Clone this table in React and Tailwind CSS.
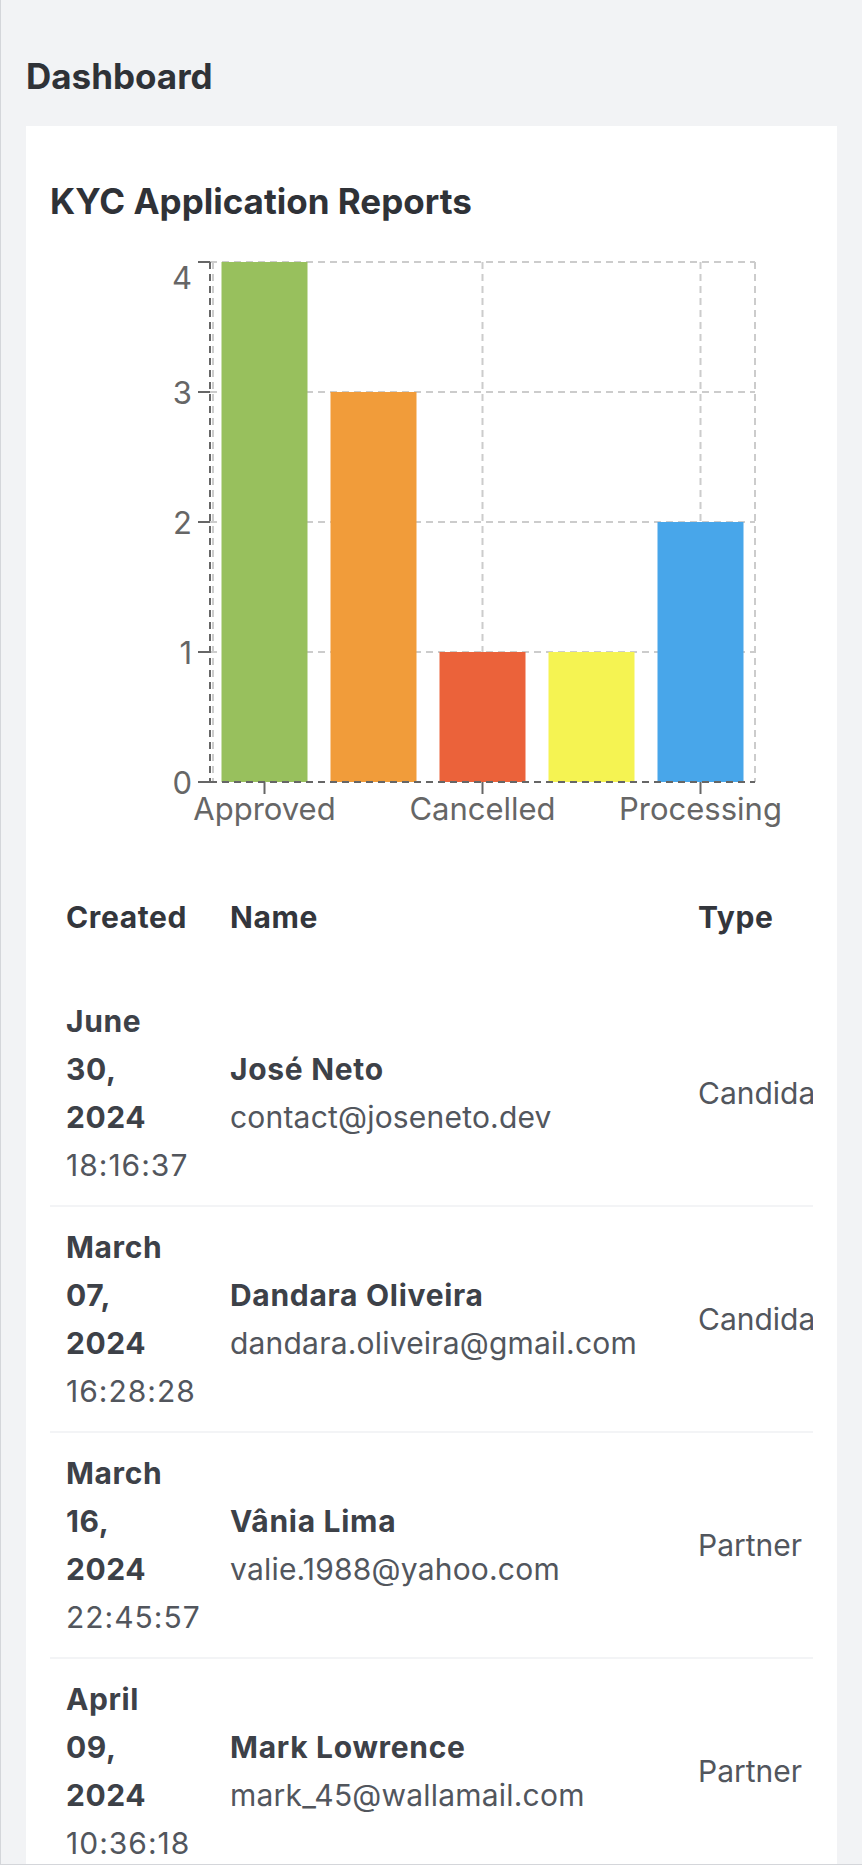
const bars = [
  { label: 'Approved', value: 4, color: '#98c05d' },
  { label: 'Pending', value: 3, color: '#f19c3a' },
  { label: 'Cancelled', value: 1, color: '#eb623a' },
  { label: 'Review', value: 1, color: '#f5f352' },
  { label: 'Processing', value: 2, color: '#48a6ea' },
];

const rows = [
  { date: ['June', '30,', '2024'], time: '18:16:37', name: 'José Neto', email: 'contact@joseneto.dev', type: 'Candidate' },
  { date: ['March', '07,', '2024'], time: '16:28:28', name: 'Dandara Oliveira', email: 'dandara.oliveira@gmail.com', type: 'Candidate' },
  { date: ['March', '16,', '2024'], time: '22:45:57', name: 'Vânia Lima', email: 'valie.1988@yahoo.com', type: 'Partner' },
  { date: ['April', '09,', '2024'], time: '10:36:18', name: 'Mark Lowrence', email: 'mark_45@wallamail.com', type: 'Partner' },
];

// chart geometry (svg units = page px)
const X0 = 160;
const X1 = 705;
const Y0 = 561;
const UNIT = 130;
const BAND = (X1 - X0) / 5;

function Chart() {
  const center = (i) => X0 + BAND * i + BAND / 2;
  return (
    <svg width="763" height="620" className="block">
      {/* grid */}
      {[1, 2, 3, 4].map((k) => (
        <line key={k} x1={X0} x2={X1} y1={Y0 - k * UNIT} y2={Y0 - k * UNIT} stroke="#ccc" strokeWidth="2" strokeDasharray="7 5" />
      ))}
      {[X0 + 3, center(0), center(2), center(4), X1].map((x, i) => (
        <line key={i} x1={x} x2={x} y1={Y0 - 4 * UNIT} y2={Y0} stroke="#ccc" strokeWidth="2" strokeDasharray="7 5" />
      ))}

      {/* bars */}
      {bars.map((b, i) => (
        <rect key={b.label} x={X0 + BAND * i + 11.5} y={Y0 - b.value * UNIT} width="86" height={b.value * UNIT} fill={b.color} />
      ))}

      {/* axes */}
      <line x1={X0} x2={X0} y1={Y0 - 4 * UNIT} y2={Y0} stroke="#666" strokeWidth="2" strokeDasharray="7 5" />
      <line x1={X0} x2={X1} y1={Y0} y2={Y0} stroke="#666" strokeWidth="2" strokeDasharray="7 5" />
      {[0, 1, 2, 3, 4].map((k) => (
        <line key={k} x1={X0 - 12} x2={X0} y1={Y0 - k * UNIT} y2={Y0 - k * UNIT} stroke="#666" strokeWidth="2" />
      ))}
      {[0, 2, 4].map((i) => (
        <line key={i} x1={center(i)} x2={center(i)} y1={Y0} y2={Y0 + 12} stroke="#666" strokeWidth="2" />
      ))}

      {/* labels */}
      {[0, 1, 2, 3, 4].map((k) => (
        <text
          key={k}
          x="142"
          y={k === 4 ? 56 : Y0 - k * UNIT}
          textAnchor="end"
          dominantBaseline="central"
          fontSize="31"
          fill="#666"
          fontFamily="Inter, sans-serif"
        >
          {k}
        </text>
      ))}
      {[0, 2, 4].map((i) => (
        <text key={i} x={center(i)} y="599" textAnchor="middle" fontSize="31" fill="#666" fontFamily="Inter, sans-serif">
          {bars[i].label}
        </text>
      ))}
    </svg>
  );
}

export default function App() {
  return (
    <div className="h-[1865px] overflow-hidden border-l border-b border-[#d4d6da] bg-[#f2f3f5] px-[25px] font-['Inter',sans-serif]">
      <h1 className="pt-[56px] text-[35px] leading-[40px] font-bold text-[#2f3237]">Dashboard</h1>

      <div className="mt-[30px] bg-white px-[24px] pt-[55px]">
        <h2 className="text-[35px] leading-[40px] font-bold text-[#2f3237]">KYC Application Reports</h2>

        <Chart />

        <div className="mt-[36px] overflow-hidden">
          <table className="w-[1000px] table-fixed border-collapse text-left text-[30px] leading-[48px]">
            <colgroup>
              <col className="w-[164px]" />
              <col className="w-[468px]" />
              <col className="w-[368px]" />
            </colgroup>
            <thead>
              <tr className="text-[#33363c] tracking-[0.6px]">
                <th className="px-[16px] pt-[16px] pb-[40px] font-bold">Created</th>
                <th className="px-[16px] pt-[16px] pb-[40px] font-bold">Name</th>
                <th className="px-[16px] pt-[16px] pb-[40px] font-bold">Type</th>
              </tr>
            </thead>
            <tbody>
              {rows.map((r) => (
                <tr key={r.email} className="border-b-2 border-[#f3f4f6]">
                  <td className="px-[16px] py-[16px] align-middle">
                    {r.date.map((w) => (
                      <div key={w} className="font-bold tracking-[0.6px] text-[#3d4148]">{w}</div>
                    ))}
                    <div className="tracking-[1px] text-[#52565d]">{r.time}</div>
                  </td>
                  <td className="px-[16px] py-[16px] align-middle">
                    <div className="font-bold tracking-[0.7px] text-[#3d4148]">{r.name}</div>
                    <div className="tracking-[0.2px] text-[#52565d]">{r.email}</div>
                  </td>
                  <td className="px-[16px] py-[16px] align-middle text-[#52565d]">{r.type}</td>
                </tr>
              ))}
            </tbody>
          </table>
        </div>
      </div>
    </div>
  );
}
